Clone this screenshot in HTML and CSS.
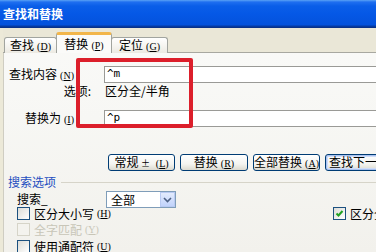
FILE: index.html
```html
<!DOCTYPE html>
<html lang="zh-CN">
<head>
    <meta charset="UTF-8">
    <title>查找和替换</title>
    <link rel="stylesheet" href="styles.css">
</head>
<body>
    <div class="dialog">
        <div class="titlebar">查找和替换</div>

        <div class="content">
            <div class="tabstrip">
                <div class="tab">查找<span class="key">(<u>D</u>)</span></div>
                <div class="tab active">替换<span class="key">(<u>P</u>)</span></div>
                <div class="tab">定位<span class="key">(<u>G</u>)</span></div>
            </div>

            <div class="panel">
                <div class="field-row">
                    <label class="field-label">查找内容<span class="key">(<u>N</u>)</span></label>
                    <div class="textbox">^m</div>
                </div>
                <div class="option-row">
                    <span class="option-label">选项:</span>
                    <span class="option-value">区分全/半角</span>
                </div>
                <div class="field-row">
                    <label class="field-label">替换为<span class="key">(<u>I</u>)</span></label>
                    <div class="textbox">^p</div>
                </div>

                <div class="highlight"></div>
            </div>

            <div class="button-row">
                <button class="btn">常规 <span class="arrow">±</span> <span class="key">(<u>L</u>)</span></button>
                <button class="btn">替换<span class="key">(<u>R</u>)</span></button>
                <button class="btn">全部替换<span class="key">(<u>A</u>)</span></button>
                <button class="btn default">查找下一处<span class="key">(<u>F</u>)</span></button>
            </div>

            <div class="section-head">
                <span>搜索选项</span>
                <div class="rule"></div>
            </div>

            <div class="search-row">
                <span class="search-label">搜索_</span>
                <div class="select">
                    <span>全部</span>
                    <div class="select-btn">
                        <svg width="9" height="6" viewBox="0 0 9 6"><path d="M1 1 L4.5 4.5 L8 1" fill="none" stroke="#4d6185" stroke-width="1.6"/></svg>
                    </div>
                </div>
            </div>

            <div class="check-grid">
                <div class="check"><span class="box"></span>区分大小写<span class="key">(<u>H</u>)</span></div>
                <div class="check"><span class="box checked">
                    <svg width="9" height="9" viewBox="0 0 9 9"><path d="M1.5 4.5 L3.5 6.5 L7.5 2" fill="none" stroke="#21a121" stroke-width="2"/></svg>
                </span>区分全/半角<span class="key">(<u>M</u>)</span></div>
                <div class="check disabled"><span class="box"></span>全字匹配<span class="key">(<u>Y</u>)</span></div>
                <div></div>
                <div class="check"><span class="box"></span>使用通配符<span class="key">(<u>U</u>)</span></div>
                <div></div>
            </div>
        </div>
    </div>
</body>
</html>
```

FILE: styles.css
```css
* {
    margin: 0;
    padding: 0;
    box-sizing: border-box;
}

body {
    font-family: "Noto Sans CJK SC", "DejaVu Sans", sans-serif;
    font-size: 12px;
    color: #000;
    background: #ECE9D8;
    width: 376px;
    height: 252px;
    overflow: hidden;
}

.dialog {
    width: 376px;
    height: 252px;
    overflow: hidden;
    white-space: nowrap;
}

.titlebar {
    height: 28px;
    line-height: 27px;
    padding-left: 3px;
    color: #fff;
    font-weight: bold;
    font-size: 12px;
    background: linear-gradient(to bottom, #5aa2f5 0, #1f6ff0 2px, #0a5ee8 6px, #0558e6 50%, #0452dc 88%, #06389c 95%, #0a2f82 100%);
}

.content {
    margin-left: 3px;
    border-left: 1px solid #cfcdc2;
    height: 224px;
    background: linear-gradient(to bottom, #fafaf8 0, #f7f7f4 40%, #f2f1ec 100%);
}

.key {
    font-size: 10px;
    margin-left: 3px;
    font-family: "Liberation Serif", serif;
}

/* tabs */
.tabstrip {
    height: 25px;
    display: flex;
    align-items: flex-end;
    background: #EAE7D7;
    border-bottom: 1px solid #a8a8a0;
    margin-left: -1px;
    padding-left: 1px;
}

.tab {
    height: 16px;
    line-height: 14px;
    text-align: center;
    border: 1px solid #a1a49f;
    border-bottom: none;
    border-radius: 3px 3px 0 0;
    background: linear-gradient(to bottom, #fff 0, #f4f3ee 60%, #eceae2 100%);
    width: 53px;
    margin-bottom: -1px;
}

.tab:nth-child(1) {
    margin-right: -1px;
}

.tab.active {
    height: 21px;
    width: 56px;
    line-height: 18px;
    background: #fbfbf9;
    border-top: 3px solid #f2b64a;
    position: relative;
    z-index: 1;
}

.tab:nth-child(3) {
    margin-left: -1px;
    width: 57px;
}

/* find/replace fields */
.panel {
    position: relative;
    padding-top: 13px;
}

.field-row {
    display: flex;
    align-items: center;
    height: 17px;
}

.field-label {
    width: 100px;
    text-align: right;
    padding-right: 30px;
    line-height: 16px;
}

.textbox {
    flex: 1;
    height: 17px;
    border-top: 1px solid #9a9a96;
    border-bottom: 1px solid #9a9a96;
    border-left: 1px solid #9a9a96;
    background: #fff;
    line-height: 14px;
    padding-left: 2px;
    font-family: "DejaVu Sans Mono", monospace;
    font-size: 11px;
}

.option-row {
    display: flex;
    height: 13px;
    line-height: 13px;
    margin-bottom: 13px;
    margin-top: 1px;
}

.option-label {
    width: 101px;
    text-align: right;
    padding-right: 14px;
}

.highlight {
    position: absolute;
    left: 72px;
    top: 5px;
    width: 117px;
    height: 70px;
    border: 4px solid #dc1f2b;
    border-radius: 2px;
}

/* buttons */
.button-row {
    display: flex;
    gap: 5px;
    margin-top: 27px;
    padding-left: 104px;
    height: 17px;
}

.btn {
    font-family: inherit;
    font-size: 12px;
    height: 17px;
    width: 67px;
    flex-shrink: 0;
    line-height: 13px;
    border: 1px solid #003c74;
    border-radius: 3px;
    background: linear-gradient(to bottom, #fff 0, #f4f4f0 60%, #dcdad0 100%);
    color: #000;
    text-align: center;
}

.btn:nth-child(2) {
    width: 68px;
}

.btn .arrow {
    font-size: 9px;
}

.btn.default {
    width: 80px;
    text-align: left;
    padding-left: 3px;
    box-shadow: inset 0 0 0 1px #a9c2f0, inset 0 0 0 2px #d0ddf7;
}

/* search options */
.section-head {
    display: flex;
    align-items: center;
    margin-top: 2px;
    height: 16px;
    padding-left: 4px;
    color: #1f4fc0;
}

.rule {
    flex: 1;
    height: 1px;
    background: #d6d4c9;
    margin-left: 5px;
    margin-top: 2px;
}

.search-row {
    display: flex;
    align-items: flex-start;
    height: 16px;
    padding-left: 13px;
}

.search-label {
    width: 89px;
    line-height: 17px;
    margin-top: 1px;
}

.select {
    display: flex;
    justify-content: space-between;
    align-items: center;
    width: 70px;
    height: 17px;
    margin-top: 2px;
    border: 1px solid #7f9db9;
    background: #fff;
    padding-left: 4px;
    position: relative;
    z-index: 1;
}

.select-btn {
    width: 15px;
    height: 15px;
    background: linear-gradient(to bottom, #e3ebfd, #c1d3fb);
    border: 1px solid #b9caf2;
    display: flex;
    align-items: center;
    justify-content: center;
}

.check-grid {
    display: grid;
    grid-template-columns: 316px auto;
    grid-auto-rows: 16.5px;
    padding-left: 13px;
}

.check {
    display: flex;
    align-items: center;
    height: 16.5px;
}

.box {
    width: 13px;
    height: 13px;
    border: 1px solid #1c5180;
    background: linear-gradient(135deg, #dcdcd7, #fff);
    margin-right: 4px;
    display: flex;
    align-items: center;
    justify-content: center;
}

.check.disabled {
    color: #c8c6b8;
}

.check.disabled .box {
    border-color: #d6d4c8;
    background: #f4f3ee;
}
```
